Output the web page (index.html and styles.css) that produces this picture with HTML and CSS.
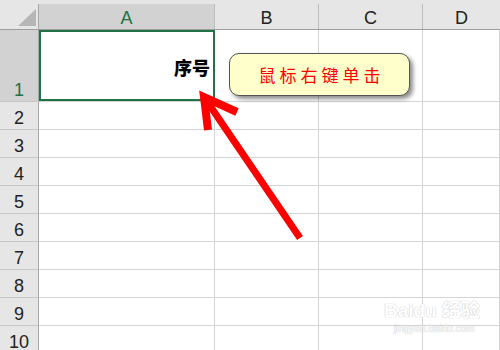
FILE: index.html
```html
<!DOCTYPE html>
<html lang="zh">
<head>
<meta charset="utf-8">
<title>Sheet</title>
<link rel="stylesheet" href="styles.css">
</head>
<body>
<div class="screen">
  <div class="topstrip"></div>
  <div class="row head">
    <div class="rh corner">
      <svg class="tri" width="20" height="20" viewBox="0 0 20 20"><polygon points="19,1 19,18 1,18" fill="#b6b6b6"/></svg>
    </div>
    <div class="ch col-a sel">A</div>
    <div class="ch col-b">B</div>
    <div class="ch col-c">C</div>
    <div class="ch col-d">D</div>
  </div>
  <div class="row r1">
    <div class="rh sel">1</div>
    <div class="cell col-a a1"><span class="val">序号</span></div>
    <div class="cell col-b"></div>
    <div class="cell col-c"></div>
    <div class="cell col-d"></div>
  </div>
  <div class="row"><div class="rh">2</div><div class="cell col-a"></div><div class="cell col-b"></div><div class="cell col-c"></div><div class="cell col-d"></div></div>
  <div class="row"><div class="rh">3</div><div class="cell col-a"></div><div class="cell col-b"></div><div class="cell col-c"></div><div class="cell col-d"></div></div>
  <div class="row"><div class="rh">4</div><div class="cell col-a"></div><div class="cell col-b"></div><div class="cell col-c"></div><div class="cell col-d"></div></div>
  <div class="row"><div class="rh">5</div><div class="cell col-a"></div><div class="cell col-b"></div><div class="cell col-c"></div><div class="cell col-d"></div></div>
  <div class="row"><div class="rh">6</div><div class="cell col-a"></div><div class="cell col-b"></div><div class="cell col-c"></div><div class="cell col-d"></div></div>
  <div class="row"><div class="rh">7</div><div class="cell col-a"></div><div class="cell col-b"></div><div class="cell col-c"></div><div class="cell col-d"></div></div>
  <div class="row"><div class="rh">8</div><div class="cell col-a"></div><div class="cell col-b"></div><div class="cell col-c"></div><div class="cell col-d"></div></div>
  <div class="row"><div class="rh">9</div><div class="cell col-a"></div><div class="cell col-b"></div><div class="cell col-c"></div><div class="cell col-d"></div></div>
  <div class="row"><div class="rh">10</div><div class="cell col-a"></div><div class="cell col-b"></div><div class="cell col-c"></div><div class="cell col-d"></div></div>

  <div class="selbox"></div>
  <div class="callout">鼠标右键单击</div>
  <svg class="arrow" width="500" height="350" viewBox="0 0 500 350">
    <line x1="300" y1="238" x2="204" y2="97" stroke="#ff0000" stroke-width="7"/>
    <polyline points="208,130 204,97 237,112" fill="none" stroke="#ff0000" stroke-width="8" stroke-linejoin="miter" stroke-miterlimit="10"/>
  </svg>
  <div class="watermark"><span class="wm1">Bai<span class="paw">du</span> 经验</span><span class="wm2">jingyan.baidu.com</span></div>
</div>
</body>
</html>
```
FILE: styles.css
```css
* { box-sizing: border-box; }
html, body { margin: 0; padding: 0; background: #ffffff; }
.screen {
  position: relative;
  width: 500px;
  height: 350px;
  overflow: hidden;
  font-family: "Liberation Sans", Arial, sans-serif;
  color: #222;
}
.topstrip { height: 4px; background: #e6e6e6; }
.row { display: flex; height: 28px; }
.row.head { height: 26px; background: #e6e6e6; border-bottom: 1px solid #9e9e9e; }
.row.r1 { height: 72px; }
.rh {
  width: 39px;
  flex: none;
  background: #e6e6e6;
  border-right: 1px solid #a8a8a8;
  border-bottom: 1px solid #c6c6c6;
  display: flex;
  align-items: flex-end;
  justify-content: center;
  font-size: 18px;
  line-height: 18px;
  padding-bottom: 2px;
  color: #222;
}
.rh.sel { background: #d2d2d2; color: #217346; }
.rh.corner { border-bottom: none; position: relative; }
.tri { position: absolute; left: 17px; top: 4px; }
.ch {
  flex: none;
  border-right: 1px solid #bdbdbd;
  display: flex;
  align-items: flex-end;
  justify-content: center;
  font-size: 18px;
  line-height: 18px;
  padding-bottom: 2px;
  color: #222;
}
.ch.sel { background: #d2d2d2; color: #217346; }
.col-a { width: 176px; }
.col-b { width: 104px; }
.col-c { width: 104px; }
.col-d { width: 80px; flex: 1; border-right: none; }
.cell {
  flex: none;
  border-right: 1px solid #d4d4d4;
  border-bottom: 1px solid #d4d4d4;
}
.cell.col-d { flex: 1; }
.a1 {
  display: flex;
  align-items: center;
  justify-content: flex-end;
  padding-right: 4px;
  padding-top: 2px;
}
.val {
  font-family: "Noto Sans CJK SC", sans-serif;
  font-weight: 900;
  font-size: 18px;
  line-height: 20px;
  color: #000;
}
.selbox {
  position: absolute;
  left: 39px;
  top: 30px;
  width: 176px;
  height: 71px;
  border: 2px solid #217346;
}
.callout {
  position: absolute;
  left: 229px;
  top: 53px;
  width: 181px;
  height: 43px;
  background: #ffffcc;
  border: 1px solid #555;
  border-radius: 10px;
  box-shadow: 3px 3px 4px rgba(0,0,0,0.45);
  display: flex;
  align-items: center;
  justify-content: center;
  font-family: "Noto Sans CJK SC", sans-serif;
  font-size: 17px;
  letter-spacing: 4px;
  padding-left: 4px;
  color: #ff0000;
}
.arrow { position: absolute; left: 0; top: 0; }
.watermark {
  position: absolute;
  left: 384px;
  top: 300px;
  display: flex;
  flex-direction: column;
  color: #ffffff;
  text-shadow: 0 0 1px #c8c8c8, 0 0 1px #c8c8c8;
  font-family: "Liberation Sans", sans-serif;
}
.wm1 { font-size: 19px; font-weight: bold; line-height: 22px; font-family: "Liberation Sans", "Noto Sans CJK SC", sans-serif; }
.wm2 { font-size: 10px; line-height: 14px; padding-left: 10px; }
```
